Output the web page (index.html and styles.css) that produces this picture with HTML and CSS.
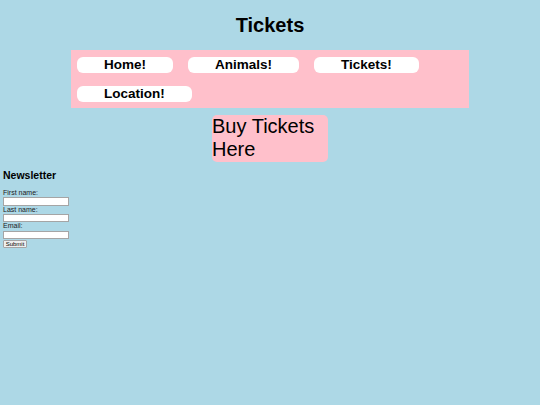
FILE: index.html
```html
<!DOCTYPE html>
<html lang="en">
<head>
    <meta charset="UTF-8">
    <title>Tickets</title>
    <link rel="stylesheet" href="styles.css">
</head>
<body>
    <h1 class="title">Tickets</h1>
    <ul class="navList">
        <li><a href="javascript:void(0);">Home!</a></li>
        <li><a href="javascript:void(0);">Animals!</a></li>
        <li><a href="javascript:void(0);">Tickets!</a></li>
        <li><a href="javascript:void(0);">Location!</a></li>
    </ul>
    <div class="buyBox">Buy Tickets Here</div>
    <div class="newsletter">
        <h3>Newsletter</h3>
        <form>
            <label for="fname">First name:</label>
            <input type="text" id="fname">
            <label for="lname">Last name:</label>
            <input type="text" id="lname">
            <label for="email">Email:</label>
            <input type="text" id="email">
            <button type="button">Submit</button>
        </form>
    </div>
</body>
</html>
```

FILE: styles.css
```css
* {
    padding: 0;
    margin: 0;
    box-sizing: border-box;
}

body {
    background-color: lightblue;
    font-family: "Liberation Sans", Arial, sans-serif;
    color: black;
}

h1.title {
    font-size: 20px;
    line-height: 23px;
    text-align: center;
    padding: 13.5px 0 13.5px;
}

ul.navList {
    list-style: none;
    width: 398px;
    margin: 0 auto;
    padding: 7px 6px 6px;
    background-color: pink;
    display: flex;
    flex-wrap: wrap;
    gap: 13px 15px;
}

ul.navList li a {
    display: block;
    height: 16px;
    line-height: 16px;
    padding: 0 27px;
    background-color: white;
    border-radius: 6px;
    color: black;
    text-decoration: none;
    font-weight: bold;
    font-size: 13.5px;
}

div.buyBox {
    width: 116px;
    margin: 7px auto 0;
    background-color: pink;
    border-radius: 5px;
    font-size: 20px;
    line-height: 23px;
    height: 47px;
}

div.newsletter {
    padding: 7px 0 0 3px;
}

div.newsletter h3 {
    font-size: 10.5px;
    line-height: 12px;
    margin-bottom: 8px;
}

div.newsletter form {
    display: flex;
    flex-direction: column;
    align-items: flex-start;
}

div.newsletter label {
    font-size: 7px;
    line-height: 8.4px;
    color: #222;
}

div.newsletter input {
    width: 66px;
    height: 8.3px;
    border: 1px solid #a5a5a5;
    background-color: white;
    font-size: 6px;
}

div.newsletter button {
    margin-top: 1px;
    width: 24px;
    height: 8px;
    font-size: 6px;
    line-height: 6px;
    font-family: "Liberation Sans", Arial, sans-serif;
    background-color: #efefef;
    border: 1px solid #a5a5a5;
    border-radius: 1px;
    padding: 0;
}
```
